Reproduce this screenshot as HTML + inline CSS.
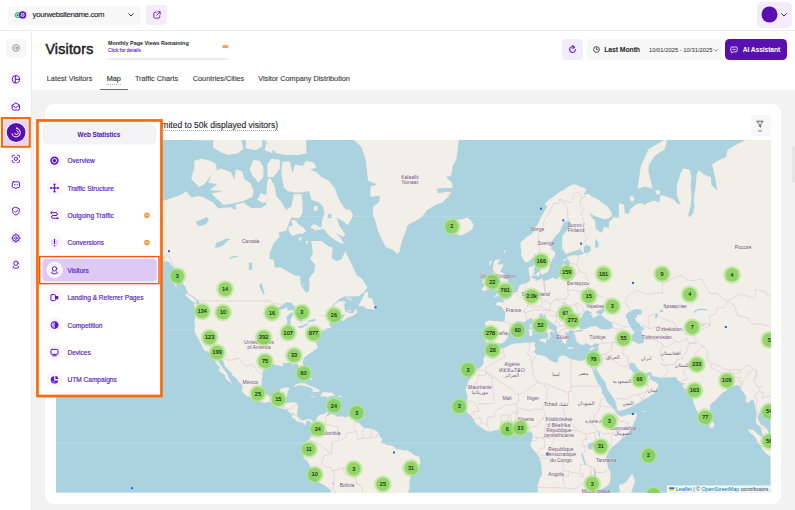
<!DOCTYPE html>
<html lang="en"><head><meta charset="utf-8"><title>Visitors - Map</title>
<style>
*{box-sizing:border-box;margin:0;padding:0}
html,body{width:795px;height:510px;overflow:hidden;background:#fff}
body{position:relative;font-family:"Liberation Sans","DejaVu Sans",sans-serif;color:#1f1f24}
.a{position:absolute}
.t{position:absolute;white-space:nowrap;line-height:1;transform-origin:0 0}
svg{position:absolute;overflow:visible}
svg.map{overflow:hidden}
.lbl text{font-family:"Liberation Sans","DejaVu Sans",sans-serif;font-size:5px;fill:#735883;text-anchor:middle;stroke:#f2efe9;stroke-width:.5px;paint-order:stroke;stroke-opacity:.7}
.ct{font-family:"Liberation Sans",sans-serif;font-size:5.5px;fill:#1a1a1a;text-anchor:middle;stroke:#1a1a1a;stroke-width:.12px}
.at{font-family:"Liberation Sans",sans-serif;font-size:5.35px;fill:#333}
#topbar{left:0;top:0;width:795px;height:30.5px;background:#fff;border-bottom:1px solid #ebebee}
#side{left:0;top:30.5px;width:31.5px;height:480px;background:#fff;border-right:1px solid #ebebee}
#hdr{left:31.5px;top:30.5px;width:764px;height:60px;background:#fff}
#bg{left:31.5px;top:90.3px;width:764px;height:420px;background:#f2f2f3}
#card{left:45.4px;top:103.6px;width:736px;height:400.4px;background:#fff;border-radius:9px}
.mi{position:absolute;left:67.4px;font-size:6.58px;color:#5a1fc4;white-space:nowrap;line-height:1;letter-spacing:0;font-weight:400;-webkit-text-stroke:.18px #5a1fc4}
.tab{position:absolute;top:75.2px;font-size:7.29px;color:#3a3a40;white-space:nowrap;line-height:1;-webkit-text-stroke:.12px #3a3a40}
</style></head><body>
<div class="a" id="topbar"></div>
<div class="a" id="side"></div>
<div class="a" id="hdr"></div>
<div class="a" id="bg"></div>
<div class="a" id="card"></div>

<!-- top bar -->
<div class="a" style="left:8px;top:5.5px;width:133px;height:19.5px;background:#f7f7f8;border-radius:4px"></div>
<svg width="14" height="10" viewBox="0 0 14 10" style="left:14px;top:10.2px"><circle cx="3.7" cy="5.1" r="2.5" fill="#a9ecc4" stroke="#1fbe5f" stroke-width="1"/><circle cx="3.5" cy="5.1" r=".9" fill="#0c8a3d"/><circle cx="8.6" cy="4.9" r="3.7" fill="#5a14c8"/><circle cx="8.6" cy="4.9" r="2.1" fill="#e9defa"/><path d="M6.5 4.9h4.2M8.6 2.8v4.2" fill="none" stroke="#5a14c8" stroke-width=".6"/></svg>
<div class="t" style="left:32.6px;top:11.4px;font-size:7.8px;letter-spacing:-.34px;color:#24242a;-webkit-text-stroke:.12px #24242a">yourwebsitename.com</div>
<svg width="6" height="4" viewBox="0 0 6 4" style="left:128px;top:13.4px"><path d="M.7.7 3 3 5.3.7" fill="none" stroke="#333" stroke-width="1" stroke-linecap="round" stroke-linejoin="round"/></svg>
<div class="a" style="left:146.4px;top:5px;width:20.2px;height:20px;background:#f3ecfd;border-radius:4px"></div>
<svg width="8" height="8" viewBox="0 0 8 8" style="left:152.5px;top:11px"><path d="M3.3 1.2H2.2A1.4 1.4 0 0 0 .8 2.6v3.2a1.4 1.4 0 0 0 1.4 1.4h3.2a1.4 1.4 0 0 0 1.4-1.4V4.7M4.9.8h2.3v2.3M7 1 3.8 4.2" fill="none" stroke="#6a1fd0" stroke-width=".95" stroke-linecap="round" stroke-linejoin="round"/></svg>
<div class="a" style="left:756.7px;top:2.4px;width:35.4px;height:25.4px;background:#f3ecfd;border-radius:5px"></div>
<svg width="17" height="17" viewBox="0 0 17 17" style="left:760.8px;top:6px"><circle cx="8.5" cy="8.5" r="8" fill="#590fb2"/></svg>
<svg width="6" height="4" viewBox="0 0 6 4" style="left:780.8px;top:12.8px"><path d="M.7.7 3 3 5.3.7" fill="none" stroke="#333" stroke-width="1" stroke-linecap="round" stroke-linejoin="round"/></svg>

<!-- header -->
<div class="t" style="left:45.4px;top:42.1px;font-size:14.2px;font-weight:400;-webkit-text-stroke:.5px #1c1c20;color:#1c1c20;letter-spacing:.23px">Visitors</div>
<div class="t" style="left:107.9px;top:40.6px;font-size:5.4px;font-weight:700;color:#26262b">Monthly Page Views Remaining</div>
<div class="t" style="left:107.9px;top:49.3px;font-size:4.89px;color:#5b14dd;-webkit-text-stroke:.1px #5b14dd">Click for details</div>
<div class="a" style="left:107.9px;top:57.7px;width:120.2px;height:2.4px;background:#ececed;border-radius:1.2px"></div>
<div class="t" style="left:222.4px;top:43px;font-size:8px;font-weight:700;color:#f58a2a;-webkit-text-stroke:.35px #f58a2a">∞</div>
<div class="a" style="left:561.6px;top:39.2px;width:21.4px;height:20.6px;background:#f3ecfd;border-radius:4px"></div>
<svg width="9" height="9" viewBox="0 0 9 9" style="left:567.8px;top:45px"><path d="M7.4 4.6a2.9 2.9 0 1 1-1.2-2.4" fill="none" stroke="#6a1fd0" stroke-width="1.15" stroke-linecap="round"/><path d="M4.6.7 6.4 2.1 4.9 3.6" fill="none" stroke="#6a1fd0" stroke-width="1.15" stroke-linecap="round" stroke-linejoin="round"/></svg>
<div class="a" style="left:586.7px;top:39.2px;width:135px;height:20.6px;background:#f7f7f8;border-radius:4px"></div>
<svg width="7" height="7" viewBox="0 0 7 7" style="left:592.9px;top:46.3px"><circle cx="3.5" cy="3.5" r="2.9" fill="none" stroke="#333" stroke-width=".85"/><path d="M3.5 1.9v1.7h1.3" fill="none" stroke="#333" stroke-width=".85" stroke-linecap="round" stroke-linejoin="round"/></svg>
<div class="t" style="left:604.2px;top:47.2px;font-size:6.9px;letter-spacing:-.1px;font-weight:700;color:#1f1f24">Last Month</div>
<div class="t" style="left:649px;top:47.9px;font-size:5.84px;color:#2a2a30">10/01/2025 - 10/31/2025</div>
<svg width="4" height="3" viewBox="0 0 4 3" style="left:713.6px;top:48.6px"><path d="M.5.6 2 2.1 3.5.6" fill="none" stroke="#444" stroke-width=".6" stroke-linecap="round" stroke-linejoin="round"/></svg>
<div class="a" style="left:725px;top:39.2px;width:62.2px;height:20.6px;background:#590fb2;border-radius:4.5px"></div>
<svg width="8" height="8" viewBox="0 0 8 8" style="left:730.2px;top:45.6px"><path d="M1.9 1h4.2A1.1 1.1 0 0 1 7.2 2.1v2.6a1.1 1.1 0 0 1-1.1 1.1H3.4L1.8 7V5.8A1.1 1.1 0 0 1 .8 4.7V2.1A1.1 1.1 0 0 1 1.9 1Z" fill="none" stroke="#fff" stroke-width=".8" stroke-linejoin="round"/><path d="M2.6 3.4h2.8" stroke="#fff" stroke-width=".7" stroke-linecap="round"/></svg>
<div class="t" style="left:742.8px;top:47.2px;font-size:6.7px;letter-spacing:-.09px;font-weight:700;color:#fff">AI Assistant</div>

<!-- tabs -->
<div class="tab" style="left:46.8px">Latest Visitors</div>
<div class="tab" style="left:106.7px;color:#1f1f24">Map</div>
<div class="tab" style="left:134.9px">Traffic Charts</div>
<div class="tab" style="left:192.8px">Countries/Cities</div>
<div class="tab" style="left:258.2px">Visitor Company Distribution</div>
<div class="a" style="left:106.7px;top:84.3px;width:14px;height:0;border-top:.6px dotted #b9b9c0"></div>
<div class="a" style="left:99.6px;top:89.1px;width:28.3px;height:1.1px;background:#6a6a72"></div>

<!-- sidebar -->
<div class="a" style="left:5.6px;top:38.8px;width:21.2px;height:19.6px;background:#f7f7f8;border-radius:4px"></div>
<svg width="8" height="8" viewBox="0 0 8 8" style="left:12px;top:44.4px"><circle cx="4" cy="4" r="3.3" fill="none" stroke="#666" stroke-width=".7"/><path d="M2.3 4h3.2M4.3 2.8 5.5 4 4.3 5.2" fill="none" stroke="#666" stroke-width=".7" stroke-linecap="round" stroke-linejoin="round"/></svg>
<svg width="32" height="300" viewBox="0 0 32 300" style="left:0;top:0">
<circle cx="15.9" cy="79.3" r="9" fill="#fbf9fe"/>
<g transform="translate(15.9 79.3)" fill="none" stroke="#5a14d0" stroke-width=".95" stroke-linecap="round" stroke-linejoin="round"><circle r="3.7" stroke-width="1"/><path d="M-.6 -3.6V3.6M-.6 0H3.6" stroke-width="1"/></g>
<circle cx="15.9" cy="106.4" r="9" fill="#fbf9fe"/>
<g transform="translate(15.9 106.4)" fill="none" stroke="#5a14d0" stroke-width=".95" stroke-linecap="round" stroke-linejoin="round"><path d="M-3.6 -1.2 0 -3.6 3.6 -1.2V2.4A1.2 1.2 0 0 1 2.4 3.6H-2.4A1.2 1.2 0 0 1 -3.6 2.4Z" stroke-width="1"/><path d="M-3.4 -1 0 1.3 3.4 -1" stroke-width=".9"/></g>
<circle cx="15.9" cy="158.8" r="9" fill="#fbf9fe"/>
<g transform="translate(15.9 158.8)" fill="none" stroke="#5a14d0" stroke-width=".95" stroke-linecap="round" stroke-linejoin="round"><path d="M-3.6 -1.6V-2.6A1 1 0 0 1 -2.6 -3.6H-1.6M1.6 -3.6H2.6A1 1 0 0 1 3.6 -2.6V-1.6M3.6 1.6V2.6A1 1 0 0 1 2.6 3.6H1.6M-1.6 3.6H-2.6A1 1 0 0 1 -3.6 2.6V1.6" stroke-width=".95"/><circle r="1.7" stroke-width=".95"/></g>
<circle cx="15.9" cy="185.2" r="9" fill="#fbf9fe"/>
<g transform="translate(15.9 185.2)" fill="none" stroke="#5a14d0" stroke-width=".95" stroke-linecap="round" stroke-linejoin="round"><path d="M-2.4 -3.4H2.4A1.2 1.2 0 0 1 3.6 -2.2V1.2A1.2 1.2 0 0 1 2.4 2.4H1L0 3.7 -1 2.4H-2.4A1.2 1.2 0 0 1 -3.6 1.2V-2.2A1.2 1.2 0 0 1 -2.4 -3.4Z" stroke-width=".95"/><path d="M-1.5 -.5h0M0 -.5h0M1.5 -.5h0" stroke-width="1"/></g>
<circle cx="15.9" cy="211.2" r="9" fill="#fbf9fe"/>
<g transform="translate(15.9 211.2)" fill="none" stroke="#5a14d0" stroke-width=".95" stroke-linecap="round" stroke-linejoin="round"><path d="M0 -3.8 3.3 -2.5V.3C3.3 2 1.8 3.2 0 3.9 -1.8 3.2 -3.3 2 -3.3 .3V-2.5Z" stroke-width=".95"/><path d="M-1.4 0 -.3 1.1 1.6 -.9" stroke-width=".95"/></g>
<circle cx="15.9" cy="238.1" r="9" fill="#fbf9fe"/>
<g transform="translate(15.9 238.1)" fill="none" stroke="#5a14d0" stroke-width=".95" stroke-linecap="round" stroke-linejoin="round"><circle r="3.3" stroke-width="1.1"/><circle r="1.3" stroke-width=".9"/><path d="M0 -4.2v.6M0 3.6v.6M-4.2 0h.6M3.6 0h.6M-3 -3l.4 .4M2.6 2.6l.4 .4M3 -3l-.4 .4M-2.6 2.6l-.4 .4" stroke-width="1"/></g>
<circle cx="15.9" cy="264.6" r="9" fill="#fbf9fe"/>
<g transform="translate(15.9 264.6)" fill="none" stroke="#5a14d0" stroke-width=".95" stroke-linecap="round" stroke-linejoin="round"><circle cy="-1.4" r="2.2" stroke-width="1"/><path d="M-2.1 1.6C-3.6 2 -3.6 3.6 0 3.6S3.6 2 2.1 1.6" stroke-width="1"/></g>
</svg>

<div class="a" style="left:792.4px;top:146px;width:6px;height:37px;background:#e6e6e9;border-radius:2.5px"></div>
<!-- card title + filter -->
<div class="t" style="right:517px;top:121.2px;font-size:8.54px;color:#26262b;-webkit-text-stroke:.12px #26262b">Visitor Map (limited to 50k displayed visitors)</div>
<div class="a" style="left:66px;top:130.3px;width:212px;height:0;border-top:1px dotted #a4a4ac"></div>
<div class="a" style="left:751.4px;top:115.4px;width:19.3px;height:20.2px;background:#f7f7f8;border-radius:3px"></div>
<svg width="8" height="12" viewBox="0 0 8 12" style="left:756px;top:119.6px"><path d="M.8 1.2h6.4L4.7 4.3v2.9L3.3 6.3V4.3Z" fill="none" stroke="#333" stroke-width=".75" stroke-linejoin="round"/><path d="M2.6 10.4 4 11.6 5.4 10.4" fill="none" stroke="#333" stroke-width=".7" stroke-linecap="round" stroke-linejoin="round"/></svg>

<svg class="map" width="714.6" height="352.7" viewBox="0 0 714.6 352.7" style="left:56.0px;top:140.3px">
<rect width="714.6" height="352.7" fill="#aad3df"/>
<g fill="#f2efe9" stroke="#d9d3cf" stroke-width=".25">
<path d="M28.3 81.9L32.4 78.2L38.7 75.7L44.2 78.2L42.5 73.8L37.4 68.6L31.6 64.2L39.9 57.6L46.2 50.3L57.6 42.2L68.9 46.1L79.0 49.5L91.6 51.8L96.6 56.1L106.7 61.1L110.5 59.7L116.8 57.6L121.8 56.1L126.9 54.0L129.9 51.0L135.7 57.6L142.0 56.1L147.0 56.9L157.1 62.5L162.2 68.3L174.8 67.3L179.8 69.9L179.8 64.6L187.4 62.5L194.9 67.9L205.0 67.9L210.1 64.6L210.1 56.1L211.3 41.0L213.8 37.0L218.9 46.5L220.1 56.1L225.2 61.8L230.2 69.9L235.3 66.6L237.8 54.0L245.3 54.0L246.6 63.2L246.6 73.2L242.8 78.2L235.3 77.6L232.7 83.8L230.2 90.8L222.7 92.6L223.4 97.1L217.6 103.6L213.8 112.9L213.6 118.9L217.6 119.4L218.9 127.4L225.2 127.4L230.2 130.6L237.8 135.1L244.1 136.0L244.8 145.0L247.9 150.0L250.4 152.4L252.9 151.2L253.4 145.0L252.9 138.6L257.9 132.0L259.2 125.1L254.2 118.9L256.7 112.9L255.4 100.9L265.5 100.9L273.1 106.8L276.8 107.8L275.6 117.9L280.6 121.3L285.7 118.9L289.2 110.9L294.5 121.8L298.3 129.7L300.8 135.5L305.8 138.6L308.3 142.5L311.4 147.1L308.8 151.2L303.3 156.0L295.7 156.4L288.2 156.4L283.1 159.1L278.1 164.1L273.1 168.9L276.8 166.3L283.1 161.0L289.9 161.4L288.2 164.8L288.7 168.6L289.4 171.5L293.2 173.0L297.0 173.3L300.0 168.6L301.3 172.2L298.3 175.1L292.0 177.6L286.9 181.1L285.2 179.4L289.4 174.8L285.7 175.1L283.1 176.5L279.4 178.3L275.6 180.4L273.8 182.8L273.8 184.6L273.1 185.2L275.6 186.9L275.6 187.6L273.1 187.9L270.5 188.6L266.3 190.0L270.5 190.0L265.7 191.1L265.5 192.9L264.7 194.9L263.0 196.4L261.7 194.6L262.7 197.8L261.0 202.0L259.7 196.8L259.4 202.3L260.5 202.9L261.7 208.1L259.2 209.8L255.9 212.2L252.9 214.0L250.4 216.1L247.9 217.9L246.8 221.7L247.1 224.4L249.1 228.4L250.4 233.0L250.1 235.8L249.1 237.4L247.6 237.6L245.8 234.9L244.8 232.7L243.6 230.1L243.3 226.7L241.3 223.8L239.5 223.8L237.0 224.7L234.0 222.6L230.2 222.9L226.9 222.9L227.2 226.4L223.9 226.1L221.4 225.2L217.6 224.5L213.3 225.5L210.1 227.8L207.0 230.4L206.5 235.2L205.8 240.8L205.5 245.4L206.8 249.5L209.8 253.8L212.6 255.4L214.1 256.6L218.4 255.4L221.4 255.6L223.7 252.2L224.2 248.9L229.0 247.6L232.7 247.5L233.2 248.7L231.5 252.2L231.0 256.2L229.5 257.5L229.7 260.9L227.9 262.5L230.2 262.9L235.3 262.6L240.3 262.6L242.3 264.9L241.6 270.1L241.1 273.9L241.6 276.5L243.8 278.8L246.6 280.6L250.4 279.8L251.6 278.8L254.2 279.3L256.9 281.1L258.4 282.9L260.0 279.8L261.7 276.7L263.5 274.9L265.0 274.4L268.0 274.2L271.3 271.6L272.6 272.6L271.0 274.4L271.5 276.0L273.1 275.2L275.1 273.9L275.6 272.2L276.3 273.9L279.9 275.5L280.6 276.5L285.7 276.2L289.4 277.5L293.2 276.0L295.7 276.0L293.7 276.7L298.3 279.0L298.8 281.6L303.3 282.9L305.8 285.9L308.3 288.0L312.1 288.2L315.9 288.5L319.7 290.5L322.2 292.3L324.0 296.8L326.0 298.8L326.0 301.8L324.7 303.1L328.5 303.4L330.5 304.9L333.5 304.9L338.6 306.9L340.4 309.4L343.6 309.2L347.4 310.4L351.2 310.3L355.0 312.4L358.2 315.2L363.0 316.2L364.3 321.0L364.0 323.6L362.5 327.2L360.0 329.7L358.0 332.3L355.0 336.1L353.7 340.0L353.7 345.3L353.2 349.2L351.9 353.2L351.2 362.7L274.8 362.7L274.8 350.6L272.1 347.9L268.8 345.8L263.0 342.4L260.0 338.7L257.7 333.6L254.9 328.4L252.9 323.8L250.6 320.3L247.9 318.2L247.1 315.0L249.6 311.7L250.6 309.7L248.1 308.9L248.1 305.6L250.1 303.1L250.4 301.1L253.4 299.3L254.2 296.8L256.7 296.5L257.4 293.5L256.7 289.2L256.9 286.2L255.7 284.9L254.9 282.9L254.4 281.9L252.9 280.3L251.6 280.5L250.4 282.1L249.4 284.7L248.1 284.9L247.4 282.9L244.8 282.1L243.1 282.6L241.1 281.6L238.5 278.8L235.8 277.8L236.0 275.2L233.5 272.4L231.2 270.3L231.5 269.3L229.0 269.5L225.2 268.2L221.4 267.5L219.4 265.9L215.6 262.5L212.6 261.7L208.8 263.0L205.0 261.7L200.2 260.0L195.4 257.5L191.1 256.2L187.4 253.0L185.6 250.6L186.6 247.6L185.4 244.3L183.8 243.0L179.8 238.0L176.3 235.2L175.3 232.4L172.2 229.5L169.2 226.7L167.2 220.9L162.7 218.5L162.9 222.3L165.9 226.7L168.0 229.5L171.0 233.8L173.0 238.5L174.0 240.2L176.0 243.0L175.0 243.8L174.0 242.1L169.7 239.1L169.0 235.2L165.9 233.0L163.9 231.8L162.2 230.1L164.2 228.1L160.4 223.8L157.9 219.4L156.6 216.1L153.6 212.2L148.3 210.4L145.0 204.2L143.3 200.4L140.0 194.6L138.5 191.6L139.0 186.3L138.2 182.8L139.5 175.8L139.5 171.1L137.7 163.3L142.0 164.1L143.3 167.5L142.8 161.0L141.5 159.9L138.2 157.2L131.9 153.2L129.4 147.1L125.6 142.1L123.6 138.6L121.8 134.2L119.3 129.7L115.5 125.1L111.8 121.3L108.0 121.8L105.5 118.9L99.7 114.9L94.1 112.9L89.1 112.4L84.0 109.4L79.0 108.8L77.7 112.9L74.0 115.9L69.4 116.9L70.2 110.4L74.0 106.8L70.2 107.8L67.7 112.9L65.1 116.4L63.4 120.3L58.8 125.1L52.5 132.0L46.2 135.5L39.9 137.3L36.7 138.2L42.5 133.3L48.8 129.7L53.8 123.7L55.8 119.4L52.5 118.9L48.8 118.9L43.7 119.8L43.7 112.9L37.4 110.4L34.9 105.2L33.6 102.5L36.7 97.1L42.5 94.3L46.2 93.7L46.2 88.5L41.2 88.5L34.9 88.5Z"/>
<path d="M141.2 163.3L137.0 161.8L133.2 159.1L128.6 154.4L130.7 153.6L136.2 156.8L140.0 160.3Z"/>
<path d="M121.3 149.1L118.8 145.0L116.8 140.8L120.1 140.8L120.1 145.0Z"/>
<path d="M62.6 127.4L67.7 126.0L68.2 121.8L64.4 123.2Z"/>
<path d="M302.5 166.3L307.1 166.3L310.9 168.9L314.6 168.9L317.9 169.9L319.2 166.7L317.2 162.9L316.4 159.1L312.1 157.2L312.1 151.2L308.3 153.2L306.3 159.1L303.3 163.7Z"/>
<path d="M289.4 157.5L295.7 160.7L296.2 159.9L293.2 157.9Z"/>
<path d="M289.9 169.7L295.2 170.4L294.5 171.9L291.2 171.1Z"/>
<path d="M265.5 191.0L270.5 189.3L270.5 190.1L266.0 191.1Z"/>
<path d="M237.8 246.5L240.3 244.1L244.1 243.1L249.1 243.2L252.9 245.2L256.7 246.8L260.5 248.4L265.0 251.1L261.7 251.9L256.2 252.0L257.4 250.0L254.2 247.6L249.1 246.2L245.3 245.2L241.6 245.7L239.0 246.8Z"/>
<path d="M264.2 255.9L266.8 251.9L268.5 251.9L271.3 252.2L275.6 252.4L279.6 255.4L276.8 255.9L273.1 256.4L271.8 257.8L269.3 256.4L264.5 256.2Z"/>
<path d="M254.7 255.9L259.7 256.6L258.2 257.5L254.9 256.7Z"/>
<path d="M282.6 255.8L286.7 256.0L285.7 257.1L282.6 257.0Z"/>
<path d="M296.2 276.0L298.3 275.7L298.3 277.5L296.0 277.5Z"/>
<path d="M254.7 238.3L255.9 237.7L256.2 240.2L254.9 239.9Z"/>
<path d="M288.2 104.1L284.4 97.6L279.4 92.9L286.9 97.1L289.4 94.3L283.1 85.6L280.6 77.6L288.2 81.9L292.0 85.6L297.0 75.7L294.5 69.9L289.4 69.2L283.1 59.7L279.1 48.8L273.1 41.0L265.5 37.0L260.5 32.0L255.4 30.3L249.1 22.5L246.6 26.0L239.0 24.3L236.5 32.9L234.0 21.6L226.4 21.6L225.2 32.9L227.7 47.3L231.5 51.0L237.8 52.5L245.3 52.5L252.9 51.0L255.4 59.7L263.0 62.5L266.8 66.6L268.5 73.2L266.0 80.7L265.5 87.9L257.9 83.8L254.2 87.3L259.2 90.3L268.0 89.1L271.8 94.3L275.8 97.9L283.1 102.5Z"/>
<path d="M157.1 55.4L162.2 60.1L167.2 64.9L177.3 63.5L187.4 61.1L196.2 56.9L197.7 51.0L194.9 43.4L188.6 39.4L186.1 31.2L179.8 29.5L178.5 39.4L174.8 32.0L164.7 28.6L157.1 32.0L152.1 42.6L160.9 44.2L153.8 50.3L167.2 51.0L155.9 53.2Z"/>
<path d="M142.8 47.3L148.3 44.2L154.6 36.2L160.9 29.5L159.6 23.4L154.6 20.7L145.8 18.8L138.2 20.7L138.2 27.8L135.2 38.6L139.5 43.4Z"/>
<path d="M202.5 42.6L207.5 37.0L207.5 26.9L203.8 20.7L197.4 19.8L193.7 28.6L196.2 35.4Z"/>
<path d="M211.3 37.0L217.6 37.0L223.9 28.6L223.9 19.8L215.1 18.8L211.3 24.3Z"/>
<path d="M201.2 59.7L207.5 63.2L211.3 61.1L211.3 55.4L205.0 53.2Z"/>
<path d="M232.7 91.4L236.5 96.0L242.8 93.7L246.6 93.7L250.4 91.4L247.9 87.9L242.8 84.4L239.0 80.1L235.3 80.1L236.5 85.6L232.7 86.8Z"/>
<path d="M242.3 97.6L246.6 97.6L244.1 101.5Z"/>
<path d="M249.6 100.9L252.1 100.9L251.4 105.2Z"/>
<path d="M257.9 71.2L261.7 70.6L261.7 65.9L257.9 65.9Z"/>
<path d="M157.1 7.4L164.7 12.3L172.2 15.1L182.3 13.2L187.4 8.4L184.8 -1.9L174.8 -10.6L157.1 -10.6Z"/>
<path d="M189.9 8.4L200.0 10.3L206.3 6.4L206.3 -10.6L189.9 -10.6Z"/>
<path d="M208.8 10.3L216.4 13.2L217.6 5.4L210.1 3.3Z"/>
<path d="M208.8 0.2L220.1 13.2L230.2 15.1L242.8 15.1L250.4 13.2L250.4 -10.6L208.8 -10.6Z"/>
<path d="M247.9 24.3L254.2 29.5L260.5 27.8L257.9 22.5L250.4 20.7Z"/>
<path d="M245.3 145.0L248.9 145.8L248.4 144.2Z"/>
<path d="M142.0 0.2L154.6 0.2L157.1 -10.6L142.0 -10.6Z"/>
<path d="M341.4 113.9L336.1 109.4L329.8 107.3L326.0 99.8L321.7 90.3L319.7 82.6L316.7 73.8L317.2 66.6L323.5 61.8L323.5 55.4L314.6 56.9L314.1 50.3L314.6 46.5L320.9 44.2L312.1 41.0L310.9 30.3L309.6 19.8L305.8 7.4L298.3 0.2L285.7 -2.9L278.1 -10.6L404.1 -10.6L402.9 0.2L401.6 10.3L400.3 19.8L396.6 26.0L395.3 35.4L390.3 37.0L395.8 42.6L397.1 48.0L388.5 48.0L380.9 48.8L382.2 53.2L389.7 51.8L395.3 52.1L392.8 56.1L386.5 62.5L378.9 65.2L371.4 69.9L366.3 76.4L360.0 80.7L357.2 81.9L351.2 85.6L349.9 91.4L347.4 97.1L344.9 105.2L343.6 111.4Z"/>
<path d="M390.3 83.5L394.8 77.6L397.8 83.5L400.8 79.8L406.6 79.2L411.2 77.3L415.0 80.4L417.7 85.3L415.5 90.0L411.7 92.3L404.9 95.7L400.3 94.0L394.8 93.4L396.6 90.6L391.5 87.1L396.6 86.5L395.3 84.1Z"/>
<path d="M517.0 44.2L521.3 45.0L523.8 46.5L527.1 47.3L530.4 49.5L527.6 54.7L532.6 54.0L536.4 56.9L540.2 58.3L545.3 61.8L551.6 66.6L555.3 71.9L556.1 75.7L552.8 78.2L549.0 79.5L541.5 77.0L536.4 75.1L533.7 72.5L535.2 77.0L539.2 80.7L539.7 88.5L544.0 92.0L546.5 92.0L547.8 86.8L552.8 87.9L552.8 82.6L557.9 77.0L562.9 78.2L562.9 73.2L562.9 63.2L561.1 62.5L567.9 64.6L569.2 73.2L572.5 73.8L574.2 69.2L580.5 63.9L586.8 63.2L588.1 65.2L590.6 63.2L598.2 60.4L603.2 62.5L604.5 54.7L613.3 57.6L618.3 59.7L620.9 63.2L624.6 64.6L620.9 55.4L620.9 45.0L624.6 32.9L627.2 28.6L633.5 29.5L635.5 37.0L634.7 45.0L635.5 56.1L634.7 66.6L632.2 75.1L633.5 77.6L637.2 73.2L638.5 66.6L637.7 59.7L639.8 45.0L640.5 35.4L642.3 30.3L647.3 33.7L649.8 35.4L654.9 37.0L655.4 45.0L661.2 50.3L659.9 41.0L656.1 24.3L663.7 19.8L670.0 17.0L671.3 10.3L678.8 5.4L688.9 0.2L699.0 -2.9L704.0 -10.6L729.2 -10.6L729.2 251.6L724.2 251.6L720.4 259.6L725.5 264.9L727.5 272.6L721.7 276.7L717.1 280.3L716.1 276.7L712.9 276.2L710.3 272.6L706.6 270.8L705.3 268.8L704.0 272.6L702.0 276.5L702.3 279.8L705.3 284.9L707.8 285.9L710.3 288.0L712.6 291.7L712.6 296.8L714.6 299.6L712.6 299.8L707.3 296.0L705.0 289.2L704.3 286.7L699.7 282.9L700.2 277.8L700.8 272.6L699.0 267.5L698.0 260.9L696.0 259.6L692.2 262.8L689.7 262.2L690.2 257.0L687.6 252.2L684.6 248.9L683.4 245.4L680.1 244.9L676.3 246.8L673.8 247.1L671.3 248.1L670.8 250.8L666.2 253.0L662.4 257.0L659.4 260.7L656.1 262.8L654.1 264.9L654.4 269.8L653.1 273.9L653.1 277.0L651.1 279.8L649.1 280.6L647.3 282.6L644.8 279.0L643.0 273.9L640.5 270.1L638.5 264.9L638.0 263.6L635.5 254.3L635.2 248.9L634.7 246.5L633.7 248.4L630.9 249.5L628.4 248.4L625.9 245.4L628.9 243.8L625.1 242.7L622.1 241.0L620.9 238.5L619.6 236.9L614.6 237.2L607.0 237.7L600.7 236.9L596.4 236.3L595.2 232.4L593.9 232.1L589.4 233.5L584.3 231.0L580.5 227.3L578.8 223.8L575.5 222.6L573.0 225.2L574.2 228.4L576.8 231.8L578.5 233.5L578.5 236.6L580.0 238.5L580.5 235.2L582.0 236.3L581.8 239.7L585.6 240.5L589.4 239.7L591.4 237.2L593.9 234.4L594.1 238.0L594.9 239.9L599.7 241.9L602.7 244.9L599.9 250.3L597.7 254.3L595.7 254.8L591.9 257.5L588.1 259.6L583.6 262.2L575.5 266.7L570.5 269.0L565.4 270.6L561.6 270.8L560.4 266.2L559.6 262.2L556.6 257.0L552.8 251.6L550.5 247.6L549.0 242.1L545.8 238.0L542.7 233.0L540.2 229.3L540.2 225.2L538.4 230.1L533.9 223.8L536.4 229.5L537.7 233.8L540.2 239.4L542.0 243.5L545.3 247.6L546.0 251.6L545.8 252.7L549.0 257.0L551.6 263.3L555.3 266.2L559.1 270.1L560.9 273.7L561.6 274.4L565.4 276.7L570.5 274.9L575.5 274.4L581.3 273.1L580.5 276.7L579.3 280.3L576.8 285.4L574.2 290.5L571.7 294.3L566.4 298.1L561.6 303.1L557.9 305.6L555.3 308.1L553.3 310.2L552.1 313.2L550.3 317.0L551.0 320.3L551.6 324.6L552.3 328.4L554.1 330.2L554.6 334.9L554.6 340.0L553.3 344.0L549.0 347.4L545.3 349.0L542.7 351.9L540.0 354.0L540.2 362.7L482.2 362.7L481.7 349.2L481.7 345.3L483.5 338.7L486.0 334.9L485.3 325.4L484.3 320.8L483.0 318.2L481.7 314.7L479.7 312.7L476.2 308.6L474.2 304.9L475.7 302.1L476.2 299.3L476.7 295.5L476.2 293.3L474.4 291.7L472.9 291.7L469.6 292.0L467.1 292.3L464.6 288.5L463.1 287.2L460.6 286.9L455.8 287.4L451.5 289.2L447.0 291.0L443.2 290.2L441.9 289.9L436.9 290.7L433.1 292.0L428.8 290.0L424.8 287.2L420.5 284.4L418.7 281.6L417.5 279.0L414.7 275.7L413.7 274.7L411.7 272.9L409.9 271.6L409.7 269.0L409.2 266.4L407.9 265.5L410.4 262.2L411.7 256.7L410.9 253.8L409.2 249.5L411.2 245.4L412.2 241.3L414.4 238.8L415.7 234.6L418.7 230.4L423.0 228.4L426.3 225.8L427.6 222.6L427.3 219.4L428.6 216.4L432.8 213.1L434.9 211.9L436.4 208.2L437.1 206.4L438.6 206.0L440.7 208.2L444.4 207.9L447.0 208.5L450.5 206.7L454.5 204.5L459.6 203.2L464.6 203.2L469.6 202.6L473.7 202.9L477.0 201.7L478.0 202.9L479.7 202.3L478.7 204.5L478.7 207.0L480.0 208.2L479.2 209.8L477.5 212.2L479.7 213.1L481.0 214.6L485.3 215.2L490.3 216.7L493.8 220.3L497.4 221.7L500.4 222.9L502.4 221.1L502.4 217.6L506.2 215.2L510.0 216.1L512.5 217.9L515.0 219.1L520.0 220.0L525.1 221.1L527.4 220.3L530.1 219.1L533.4 220.0L536.4 220.6L538.4 219.7L539.7 217.6L540.2 215.5L541.5 212.2L542.5 208.8L542.2 207.3L543.2 203.9L541.5 203.9L539.2 203.2L536.4 205.4L534.7 205.7L532.6 204.2L529.4 202.9L528.9 204.8L525.3 204.8L523.1 203.5L521.1 202.6L520.0 200.4L519.5 198.1L519.5 195.2L517.8 194.6L518.0 192.8L521.3 191.6L525.1 191.6L527.4 190.5L525.3 189.3L528.4 189.0L531.1 188.6L535.2 186.3L540.5 186.3L543.7 188.6L547.8 189.6L552.1 189.6L556.8 187.6L556.6 184.6L555.3 182.8L552.1 180.8L549.0 178.3L547.3 176.9L544.7 174.8L546.5 173.3L548.3 171.1L548.5 168.6L551.0 167.8L549.0 168.2L546.5 168.6L544.0 169.7L541.0 171.1L540.2 173.3L544.0 174.4L541.2 175.8L539.0 176.9L536.9 178.0L536.2 177.3L536.7 175.1L533.9 174.4L536.4 172.2L533.9 171.9L532.1 170.4L529.4 170.4L528.1 172.6L526.9 175.1L524.3 178.7L522.3 182.1L521.3 184.6L522.6 186.6L525.1 189.0L524.8 189.6L521.3 190.0L519.3 191.6L518.0 191.9L517.5 191.0L517.3 190.3L513.5 190.0L512.5 191.6L513.2 192.6L510.7 193.1L510.0 191.9L509.7 191.0L509.0 192.9L510.0 195.2L510.5 196.2L509.7 196.8L512.5 198.8L512.5 200.5L511.5 199.7L510.0 199.7L510.5 201.3L510.0 204.2L508.7 204.3L507.7 202.6L506.7 203.2L505.7 200.4L506.7 198.8L505.2 198.5L504.2 196.5L502.9 194.2L500.9 191.9L500.9 188.3L501.1 186.9L498.6 184.9L497.6 184.2L493.3 181.1L490.3 178.7L489.6 175.8L488.3 174.8L487.3 176.5L486.0 174.0L486.5 173.3L483.0 174.4L483.5 176.2L483.8 179.0L486.0 180.8L487.8 184.6L490.3 186.6L492.8 186.6L492.1 187.9L494.6 189.3L497.4 190.8L498.6 192.6L498.2 193.6L497.1 191.9L495.3 191.3L493.8 192.9L493.8 194.2L495.3 196.2L493.6 198.1L492.6 199.6L491.4 199.1L491.8 197.5L492.8 196.2L491.6 192.9L489.8 192.3L489.3 190.8L487.8 190.3L486.3 189.0L483.8 188.1L482.7 186.9L481.5 185.6L480.0 184.9L478.5 183.2L478.0 181.1L476.7 179.0L474.4 178.0L472.7 179.4L470.9 180.1L468.9 182.1L466.9 182.5L465.6 181.8L463.8 181.5L462.1 180.9L460.1 182.1L459.6 184.6L460.3 185.2L457.5 188.3L455.0 189.3L454.0 190.6L451.2 194.6L452.5 197.0L450.7 198.3L449.7 200.7L446.5 203.5L440.9 203.5L438.5 205.3L437.9 205.7L436.1 204.2L434.4 202.0L432.1 202.6L429.3 202.6L429.8 198.1L428.3 197.2L428.6 194.9L429.6 192.3L430.1 189.0L429.6 185.6L428.6 182.8L430.8 181.5L432.6 180.2L437.6 180.9L442.4 181.1L444.4 181.6L447.5 181.5L448.2 181.1L449.0 177.1L449.2 173.9L449.0 171.5L447.0 169.3L446.5 167.5L444.4 166.3L441.2 165.6L440.0 164.7L439.9 163.3L443.2 161.8L447.0 162.4L448.0 162.4L447.2 158.3L448.7 158.3L449.2 159.7L452.3 159.1L454.8 157.5L456.0 154.8L456.8 153.2L459.3 152.2L461.1 151.6L462.1 149.1L463.8 145.2L465.6 144.2L469.4 143.3L472.2 142.1L473.7 141.2L474.4 139.0L473.7 136.9L473.2 134.2L472.4 129.7L472.7 126.9L475.9 126.5L478.7 123.9L478.5 127.4L477.7 129.7L478.0 131.3L479.5 130.2L476.7 134.2L475.9 136.4L475.9 137.3L477.7 139.0L479.7 139.0L479.5 140.8L482.5 140.1L485.8 138.2L487.8 141.2L492.3 139.5L497.4 137.3L499.1 139.0L501.4 138.8L502.4 136.9L504.9 135.1L505.2 133.3L504.9 129.7L505.9 125.1L509.0 123.9L510.5 126.0L512.5 127.4L513.5 123.7L513.7 121.0L511.2 119.8L511.0 116.9L514.3 115.7L517.5 114.9L522.6 115.4L528.1 113.4L524.3 109.4L520.0 110.6L515.0 112.2L510.0 113.9L508.0 110.9L505.7 107.8L506.2 105.2L506.2 96.5L508.7 93.1L513.2 87.3L516.0 85.6L513.7 81.0L512.7 80.7L508.0 82.3L505.7 87.3L503.2 92.6L499.4 96.0L497.4 99.3L495.9 100.4L495.3 104.7L495.3 109.4L498.6 111.4L499.6 113.4L498.4 116.4L496.1 119.4L494.1 123.7L493.3 128.8L492.1 131.5L488.0 134.0L486.8 134.7L484.8 133.8L484.0 131.8L484.3 129.0L482.0 124.1L480.2 120.8L480.0 117.4L479.0 113.4L478.2 116.4L476.4 117.9L472.2 122.0L469.6 122.7L466.4 117.9L465.1 115.4L465.4 110.9L464.6 107.8L464.6 103.1L464.9 101.5L467.6 99.8L471.4 96.5L475.9 93.7L477.2 91.4L479.7 86.8L482.2 83.8L483.8 79.5L488.3 71.2L491.1 66.6L488.5 63.9L492.3 60.4L499.9 54.7L503.7 51.8L507.4 50.3L511.2 47.3Z"/>
<path d="M437.6 157.0L439.4 156.0L440.7 153.2L444.4 152.4L445.2 151.2L443.9 151.4L441.9 150.8L438.6 149.6L441.7 147.1L440.2 145.8L440.4 143.3L443.4 143.5L444.4 143.1L444.4 140.8L442.9 138.6L443.9 136.6L439.7 137.7L439.1 137.1L439.9 133.8L439.7 132.2L437.6 134.9L437.9 131.1L436.4 128.8L437.6 126.0L437.4 123.2L439.4 119.8L444.3 119.6L441.9 123.2L441.7 124.8L447.0 124.1L447.5 125.1L446.7 126.7L445.4 129.7L443.9 131.8L447.0 132.7L448.5 136.4L450.5 138.6L451.7 140.3L452.3 142.5L452.9 144.6L452.5 145.6L453.3 145.2L455.3 145.2L456.4 146.7L456.0 148.7L455.0 150.0L453.8 151.2L455.5 151.8L455.4 152.8L454.4 153.6L452.6 154.2L448.7 154.0L447.0 154.8L445.8 155.0L443.2 155.2L442.9 156.4L441.5 155.8L438.9 157.4Z"/>
<path d="M433.3 134.7L436.4 135.5L437.6 138.2L438.1 139.5L436.4 140.8L436.6 143.5L436.9 145.2L436.0 148.3L433.1 148.7L431.1 150.0L427.3 151.4L426.0 149.6L425.8 148.7L427.6 146.7L427.0 146.9L429.3 144.2L426.3 143.3L426.5 140.8L426.8 139.5L430.3 139.5L429.8 137.7L431.1 135.8Z"/>
<path d="M483.5 199.4L485.8 198.8L491.3 198.5L490.1 201.0L490.1 203.5L487.8 202.4L483.8 200.7Z"/>
<path d="M472.7 189.6L475.2 188.8L476.4 190.3L476.4 193.3L475.9 195.9L474.7 196.0L473.2 196.2L473.2 192.3L472.5 190.6Z"/>
<path d="M475.7 182.8L476.1 185.6L475.2 188.3L473.7 186.6L473.7 184.6L475.4 183.9Z"/>
<path d="M511.2 207.0L513.0 207.0L516.3 207.8L518.3 208.1L518.0 208.8L514.3 209.1L511.2 208.1Z"/>
<path d="M533.4 208.7L535.2 207.8L539.2 206.7L537.7 208.8L536.7 209.3L535.2 210.1L533.7 209.6Z"/>
<path d="M458.0 194.2L460.1 193.1L460.6 194.2L459.6 195.2L458.3 194.7Z"/>
<path d="M480.2 133.3L483.8 131.5L483.8 133.8L482.7 136.4L480.2 135.5Z"/>
<path d="M476.7 134.2L479.2 134.2L479.0 136.0L477.2 136.0Z"/>
<path d="M497.9 127.4L499.9 123.2L499.4 125.6Z"/>
<path d="M507.4 121.8L510.0 119.8L509.5 117.9L507.4 119.8Z"/>
<path d="M581.5 48.8L583.1 37.8L584.8 26.0L592.4 9.3L606.2 1.3L618.3 -6.1L628.4 -10.6L613.3 -10.6L608.8 9.3L598.7 16.0L592.9 25.1L592.4 31.2L596.7 48.8L589.1 46.5Z"/>
<path d="M573.7 57.6L576.3 55.4L578.8 59.0L576.8 61.8L574.5 61.1Z"/>
<path d="M599.4 50.3L604.0 50.3L604.0 54.0L600.7 54.7Z"/>
<path d="M576.3 333.6L577.8 337.4L579.0 342.1L577.3 346.1L576.8 347.9L575.5 351.9L574.2 362.7L562.9 362.7L563.9 353.2L563.4 349.2L562.9 346.6L563.9 344.5L566.7 344.0L568.7 343.2L571.2 340.8L573.0 337.7L575.2 334.9Z"/>
<path d="M653.6 278.3L656.6 281.3L658.4 284.7L657.7 286.9L655.1 288.1L653.6 287.4L653.1 284.1L653.4 280.8Z"/>
<path d="M692.2 289.0L697.7 290.0L700.8 293.5L704.8 296.3L707.8 298.3L711.6 301.1L713.6 303.1L715.4 306.9L719.2 310.7L718.6 317.7L715.4 317.7L709.8 313.2L706.6 309.4L704.8 305.4L701.5 302.3L700.2 298.8L697.0 295.0L693.9 292.5L692.2 290.0Z"/>
<path d="M586.3 271.1L589.4 271.1L588.9 271.9L586.8 271.9Z"/>
<path d="M510.5 196.2L513.0 197.5L514.0 199.4L512.5 198.5L510.7 197.2Z"/>
<path d="M448.2 109.9L449.5 110.4L449.0 113.4L448.0 111.9Z"/>
<path d="M433.9 121.3L436.4 120.8L434.9 123.7L433.3 126.5L433.1 124.6Z"/>
<path d="M409.4 228.5L411.4 228.0L410.7 229.4Z"/>
<path d="M412.2 229.3L413.2 229.1L413.2 230.1L412.2 230.1Z"/>
<path d="M415.5 229.3L417.2 227.5L417.0 229.0Z"/>
</g><g fill="#aad3df">
<path d="M570.5 174.0L573.0 172.2L576.8 170.0L580.5 168.9L585.6 169.7L585.6 174.8L581.3 174.8L580.5 177.6L578.8 178.3L580.5 182.1L584.3 183.9L584.3 186.9L588.1 187.3L588.1 189.6L585.6 191.0L585.6 192.9L586.8 195.2L588.1 199.4L587.8 201.7L586.8 202.9L583.1 203.9L579.3 202.6L576.8 201.0L575.2 198.1L576.3 195.2L578.8 191.6L576.8 191.0L575.5 187.9L573.7 185.2L572.0 182.8L571.5 180.1L570.0 177.6Z"/>
<path d="M219.9 169.7L223.9 170.0L229.0 168.6L230.7 167.1L231.5 170.4L237.8 170.0L239.0 170.4L238.5 166.7L235.3 162.6L230.2 162.2L226.9 164.8L223.9 166.7Z"/>
<path d="M230.7 187.3L232.7 187.4L234.5 184.6L234.5 179.4L236.5 175.8L237.8 173.0L235.3 172.6L231.5 175.8L230.2 177.3L231.5 181.1L230.7 185.2Z"/>
<path d="M238.5 172.6L241.6 171.9L246.6 172.2L250.4 174.8L250.4 177.6L247.1 176.9L246.1 181.8L244.3 182.8L244.1 180.1L241.6 180.4L240.5 180.4L242.1 177.6L241.6 174.8Z"/>
<path d="M241.8 187.3L244.1 188.3L247.9 186.9L252.9 183.9L252.9 183.2L249.1 184.2L245.3 185.9L242.8 185.9Z"/>
<path d="M250.9 181.8L255.4 181.8L259.7 181.1L259.7 178.7L256.7 179.4L252.1 180.4Z"/>
<path d="M141.9 85.7L145.9 85.7L149.9 83.9L153.0 80.5L151.0 76.9L146.9 78.9L142.9 80.5L139.9 81.9Z"/>
<path d="M158.5 107.5L162.8 107.5L167.1 105.3L171.3 101.2L174.6 98.9L170.3 98.4L164.9 101.2L160.6 102.6Z"/>
<path d="M207.3 154.6L208.8 154.0L207.3 149.1L205.6 142.8L203.0 144.9L204.5 149.1Z"/>
<path d="M173.3 118.9L177.3 117.8L183.4 116.6L179.4 115.8L174.3 117.0Z"/>
<path d="M531.9 303.9L534.4 302.6L537.7 302.6L538.4 305.6L536.7 308.9L533.9 309.7L532.1 308.6Z"/>
<path d="M525.6 311.7L526.9 314.5L528.1 319.5L530.1 325.1L528.9 324.9L526.6 319.5L525.6 314.5Z"/>
<path d="M537.7 327.2L539.2 331.0L539.7 334.9L540.5 339.5L539.2 339.3L538.4 334.9L537.9 331.0Z"/>
<path d="M528.1 112.9L531.4 113.2L534.7 110.9L534.7 106.8L530.1 104.7L527.6 107.8Z"/>
<path d="M539.0 107.8L542.7 107.3L542.7 103.6L540.2 98.7L539.0 101.5Z"/>
<path d="M483.5 119.8L486.8 119.8L487.3 116.4L484.8 116.4Z"/>
<path d="M637.2 173.7L641.0 170.8L646.1 169.7L651.1 170.8L650.6 168.9L643.5 168.6L638.5 170.4Z"/>
<path d="M598.9 178.3L601.2 178.3L601.7 173.0L599.7 173.7Z"/>
<path d="M603.7 172.2L607.0 171.9L606.5 169.3L604.0 170.0Z"/>
<path d="M235.3 272.9L237.3 272.9L238.3 274.9L236.3 274.7Z"/>
<path d="M542.2 291.7L543.5 292.3L544.2 296.8L543.0 296.5Z"/>
<path d="M275.6 342.1L277.6 342.9L278.9 345.3L276.6 344.5Z"/>
<path d="M192.9 130.2L196.2 129.3L196.2 122.7L192.9 122.7Z"/>
<path d="M271.8 78.2L275.6 78.2L275.6 73.8L271.8 73.8Z"/>
<path d="M487.5 123.7L489.0 119.8L489.6 120.3L488.3 123.7Z"/>
<path d="M644.0 184.9L649.3 183.9L647.3 185.9Z"/>
<path d="M558.6 198.1L561.9 196.5L561.1 198.5Z"/>
<path d="M565.7 201.7L567.4 198.8L567.7 201.7Z"/>
<path d="M528.6 300.3L531.1 297.3L530.9 298.8L529.6 300.6Z"/>
</g>
<g fill="none" stroke="#cfa9cb" stroke-width=".45" stroke-opacity=".8" stroke-linejoin="round">
<path d="M141.2 161.0L212.2 161.0L213.1 159.9L213.6 162.2L220.1 163.7L226.4 164.8"/>
<path d="M263.7 175.8L271.8 175.8L274.8 172.6L277.6 167.1L281.1 168.2L281.1 173.3L283.1 176.2"/>
<path d="M96.6 56.1L96.6 111.4L101.7 112.9L105.5 118.4L111.8 114.9L115.5 120.8L119.8 129.3L124.4 132.0L123.6 137.3"/>
<path d="M156.9 216.4L162.7 216.4L172.2 220.0L179.3 220.0L179.3 218.5L183.6 218.5L188.6 224.9L192.4 226.7L193.7 224.4L197.4 225.2L201.2 231.0L207.0 235.5"/>
<path d="M219.6 266.2L221.4 262.2L223.9 262.2L222.7 259.1L227.2 257.5L227.2 262.5L229.5 263.0"/>
<path d="M227.2 262.5L226.9 266.4L224.9 268.0"/>
<path d="M226.9 266.4L230.7 269.0"/>
<path d="M231.0 270.1L235.3 268.0L238.3 265.4L242.3 264.9"/>
<path d="M236.0 274.9L240.3 275.7L241.3 275.5"/>
<path d="M243.1 282.6L243.1 279.0"/>
<path d="M272.3 273.1L269.3 277.8L269.8 284.7L275.6 285.4L281.9 287.4L283.1 300.1L275.6 303.1L275.6 313.7L268.0 315.7L265.5 322.1L269.3 327.2L274.3 327.2L276.8 331.0L287.4 327.9L288.2 333.6L299.5 337.4L300.8 344.5L305.1 344.7L306.6 349.8L305.8 354.6"/>
<path d="M252.9 299.6L262.2 303.4L275.6 313.7"/>
<path d="M249.6 311.7L252.9 315.7L254.7 311.7L262.2 303.4"/>
<path d="M300.8 281.6L297.5 288.0L299.0 290.0L300.8 291.7L290.7 293.0L289.4 298.1L284.4 300.6"/>
<path d="M308.3 288.0L305.8 293.0L308.3 298.1L310.9 298.1L314.6 297.3L320.9 297.6L321.7 293.0"/>
<path d="M300.8 291.7L301.5 299.3L308.3 298.1"/>
<path d="M315.9 288.5L314.6 297.3"/>
<path d="M276.8 331.0L278.1 334.9L278.1 342.1L276.8 347.9L274.6 350.0"/>
<path d="M276.8 347.9L279.4 351.9L280.1 357.3"/>
<path d="M256.9 281.1L255.7 284.9"/>
<path d="M418.7 230.4L430.1 230.4L430.1 227.5L444.4 218.8L448.7 217.3L447.0 208.5"/>
<path d="M430.1 231.5L439.9 238.0L444.4 242.1L455.0 248.7L460.3 254.3L462.6 254.0L466.6 253.0L482.2 242.1"/>
<path d="M409.2 248.1L419.2 248.1L419.2 243.5L421.8 242.1L421.8 235.2L430.1 235.2L430.1 231.5"/>
<path d="M430.1 231.5L435.6 238.0L438.1 260.9L438.6 263.6L423.0 263.6L421.3 265.6L415.5 260.7L410.4 262.2"/>
<path d="M439.9 238.0L435.6 238.0"/>
<path d="M473.7 202.9L472.9 210.4L470.9 212.5L474.7 217.9L475.9 223.2L477.2 233.8L475.9 234.4L482.2 242.1L487.8 244.6L489.8 243.5L512.5 253.0L512.5 251.6L515.0 251.6L515.0 219.1"/>
<path d="M481.0 214.6L478.0 218.5L477.2 222.3L475.9 223.2"/>
<path d="M515.0 246.2L545.0 246.2"/>
<path d="M512.5 253.0L512.5 263.0L509.5 263.6L507.4 270.1L508.7 275.2L511.5 280.3L513.7 281.1L521.3 290.5L529.9 294.0L537.7 292.5L542.5 291.5"/>
<path d="M487.8 244.6L491.1 248.9L491.1 259.9L486.3 268.2L488.5 270.6L487.8 271.6L489.8 277.8L487.0 277.8L491.1 284.1L488.8 288.0L488.5 291.5L492.3 297.6"/>
<path d="M462.6 254.0L462.6 260.9L460.8 263.8L454.5 264.9L452.5 264.9L450.2 264.9L447.0 266.9L444.4 268.5L441.2 269.5L438.6 273.1L438.1 276.7"/>
<path d="M460.8 263.8L461.1 273.4L458.8 283.1L458.8 287.2"/>
<path d="M461.1 273.4L463.8 268.2L469.6 270.1L474.7 270.6L479.0 269.0L483.5 269.8L486.3 268.2"/>
<path d="M473.4 291.2L475.4 286.9L480.5 285.9L482.2 283.6L487.0 277.8"/>
<path d="M438.1 276.7L436.4 276.5L431.8 277.3L431.1 283.9L433.1 292.0"/>
<path d="M444.9 290.2L445.2 279.0L444.9 275.2L451.7 274.9L452.5 287.4"/>
<path d="M456.0 287.4L455.5 279.6L454.0 276.7L454.3 275.2L457.8 271.9L461.1 273.4"/>
<path d="M423.0 285.7L426.0 281.6L428.3 284.4L431.1 283.9"/>
<path d="M418.5 280.3L420.7 278.0L424.3 277.8L426.0 281.6"/>
<path d="M414.2 275.5L417.5 273.4L417.5 271.1L423.0 271.6L421.3 265.6"/>
<path d="M476.7 297.3L480.5 297.3L480.5 300.6L476.2 300.6"/>
<path d="M480.5 297.6L485.5 297.6L488.5 299.6L488.5 304.4L488.3 307.9L483.5 309.2L482.2 312.9L480.2 312.9"/>
<path d="M485.5 297.6L492.3 297.6L492.8 298.8L498.9 294.3L498.9 292.3L501.1 290.5L508.5 292.8L513.7 290.2L521.3 290.5"/>
<path d="M498.9 294.3L496.9 303.1L492.8 308.4L492.3 313.2L488.5 315.5L484.8 314.7L482.7 318.0"/>
<path d="M483.0 318.2L493.8 318.0L494.8 321.5L501.1 320.8L502.4 320.8L506.9 321.5L507.2 331.0L512.5 331.0L512.5 336.1L507.4 336.1L507.4 344.5L511.0 348.2"/>
<path d="M481.7 347.4L487.3 347.6L498.6 347.6L511.0 348.2L515.8 348.7"/>
<path d="M512.5 331.0L516.0 332.8L520.6 332.8L525.1 337.2L527.1 337.2L527.1 334.1L523.6 333.3L524.3 327.7L524.8 324.6L529.6 324.1"/>
<path d="M529.6 324.1L534.9 326.9L535.2 335.1L528.1 341.3L528.6 343.2L534.9 345.8L534.9 350.6L535.2 354.0"/>
<path d="M515.8 348.7L520.0 349.0L524.8 343.7L528.6 343.2"/>
<path d="M534.9 326.9L538.4 327.7L539.5 332.3L546.5 332.8L553.8 329.7"/>
<path d="M539.5 332.3L538.7 339.8L542.2 344.0L540.7 346.9L538.4 340.3"/>
<path d="M529.6 324.1L528.6 320.8L526.1 314.2L529.6 311.4L528.9 309.2L528.9 305.9L526.6 306.6L526.6 301.6L530.1 297.3L529.9 294.0"/>
<path d="M528.9 305.9L537.4 305.6L546.8 310.7L550.8 315.0"/>
<path d="M537.4 305.6L537.4 302.6L540.2 298.6L537.7 292.5"/>
<path d="M542.5 291.5L545.0 292.0L548.0 294.0L552.3 293.3L555.3 293.3L557.6 293.0L555.3 296.0L555.3 305.6L556.6 307.4"/>
<path d="M557.6 293.0L560.4 291.2L565.4 290.5L573.0 282.9L570.5 282.9L562.9 280.3L560.4 275.2L559.4 274.9L557.3 274.9L559.9 271.3L560.6 270.8"/>
<path d="M559.9 271.3L554.8 267.2L549.0 266.4L547.5 265.1L544.0 266.7L543.7 264.6L545.3 259.6L549.3 257.0"/>
<path d="M544.0 266.7L543.0 270.8L540.2 273.1L538.4 276.5L537.9 281.3L535.2 282.9L536.9 283.6L540.2 289.5L542.5 291.5"/>
<path d="M540.0 225.2L538.4 220.0"/>
<path d="M540.0 225.2L543.0 226.1L546.5 223.8L545.3 219.4L550.3 217.6L550.8 217.0L549.8 213.7L555.3 210.7L556.1 204.2L558.9 202.3L564.9 202.0L563.6 198.1L564.9 193.9"/>
<path d="M550.3 217.6L553.8 218.2L557.9 220.3L564.7 226.1L569.2 226.4L571.7 223.8L573.0 223.8L574.2 224.1"/>
<path d="M569.2 226.4L572.2 228.1L574.0 228.1"/>
<path d="M573.0 223.8L572.2 220.9L572.5 216.7L567.9 214.9L566.4 211.9L568.4 208.5L566.4 205.7L564.9 202.0"/>
<path d="M543.2 203.9L544.5 203.2L548.3 202.9L552.8 203.2L558.9 202.3"/>
<path d="M542.5 209.9L544.2 211.3L542.2 214.0L541.7 215.8L549.8 213.7"/>
<path d="M559.9 261.2L560.9 258.6L563.4 258.6L568.9 259.1L571.7 259.3L575.5 255.4L583.1 254.3L585.8 260.7"/>
<path d="M583.1 254.3L590.6 251.6L592.4 246.2L591.1 244.3L584.6 243.8L582.0 240.5L581.0 239.1"/>
<path d="M592.4 246.2L591.1 244.3L593.1 240.5L594.1 238.3"/>
<path d="M590.6 251.6L585.8 260.7"/>
<path d="M564.9 193.9L568.4 196.5L573.0 193.9L575.2 198.1"/>
<path d="M587.8 201.7L593.1 199.1L596.2 198.8L601.5 201.0L606.2 203.9L606.0 207.9L604.7 211.0L605.5 219.4L607.8 219.7L605.2 224.1L609.5 225.5L612.0 231.8L610.3 233.5L607.3 237.4"/>
<path d="M605.2 224.1L609.5 225.5L619.1 224.1L620.1 220.3L626.7 218.2L627.2 214.6L630.9 211.9L632.7 204.2L640.0 202.6"/>
<path d="M606.2 203.9L609.5 207.9L614.6 204.8L619.6 201.3L623.4 202.6L627.2 200.7L630.9 198.1L632.7 203.5L640.0 202.6L640.8 202.0"/>
<path d="M623.9 241.6L629.2 239.9L631.2 238.8L627.2 232.4L629.4 229.5L635.7 224.1L640.3 220.6L639.8 215.5L638.5 214.3L645.6 206.7L648.6 207.3L651.1 211.0L650.6 214.3L652.4 216.4L650.3 219.4L656.1 223.2L653.9 227.3"/>
<path d="M653.9 227.3L661.9 231.5L668.2 233.5L674.0 234.1L674.3 229.8L668.7 229.5L661.2 225.2L656.1 223.2"/>
<path d="M674.0 234.1L678.3 233.2L683.9 233.0L684.1 230.1L689.4 226.4L693.9 225.5L697.2 229.0L697.2 229.8"/>
<path d="M674.3 229.8L676.1 231.5L678.3 229.0L683.1 230.1L684.1 230.1"/>
<path d="M676.6 246.2L675.8 239.9L674.0 238.3L674.8 234.1L678.3 235.2L678.3 237.4L684.9 238.0L681.9 241.6L684.6 241.6L685.4 246.5L684.6 248.9"/>
<path d="M685.4 246.5L687.1 240.8L690.7 236.9L691.9 233.5L697.2 229.8L700.8 230.7L697.7 240.8L701.5 246.2L707.1 247.3"/>
<path d="M700.8 230.7L700.5 238.5L697.7 240.8"/>
<path d="M701.5 246.2L704.3 250.8L698.5 255.4L701.3 261.7L699.5 264.9L702.0 271.1L703.0 273.1L700.8 277.0"/>
<path d="M704.3 250.8L705.5 253.0L707.3 252.7L706.6 258.3L709.3 256.4L714.1 256.2L716.1 260.9L718.1 266.4L711.6 266.9L710.1 268.5L711.3 273.4"/>
<path d="M704.3 286.9L706.8 288.7L709.3 287.4"/>
<path d="M569.7 177.6L574.2 170.0L570.5 164.8L569.2 162.9L571.7 155.6L580.5 150.4L590.6 154.4L598.2 153.2L607.0 153.2L605.7 145.0L615.8 139.0L625.9 135.1L630.9 139.9L637.2 140.8L645.6 139.0L648.3 143.7L653.6 153.6L661.2 153.2L666.7 158.7L672.0 160.7"/>
<path d="M672.0 160.7L668.0 167.8L661.2 167.8L659.4 174.0L653.4 176.2L654.1 185.6L649.8 183.2L643.0 183.2L638.5 182.1L630.9 185.2L628.9 189.6L623.4 189.6L619.6 186.3L618.3 182.8L605.7 178.3L599.4 174.0L593.1 175.8L593.1 188.6L588.1 185.2L584.1 186.9"/>
<path d="M593.1 188.6L595.7 188.6L603.2 185.6L608.3 192.9L613.3 196.5L619.6 201.3"/>
<path d="M654.1 185.6L646.1 189.6L637.5 194.9L638.0 197.8L640.8 202.0L648.1 207.3L648.6 207.3"/>
<path d="M628.9 189.6L636.0 190.3L637.5 194.9L629.7 194.2L626.7 190.6"/>
<path d="M672.0 160.7L673.8 162.6L678.8 165.6L681.3 175.1L692.4 178.3L695.0 183.9L706.6 184.2L716.6 187.6"/>
<path d="M672.0 160.7L678.1 157.5L684.9 154.0L696.5 157.9L699.7 155.2L699.0 149.1L709.6 152.0L711.6 156.0L716.6 155.6"/>
<path d="M529.9 56.1L524.8 59.0L523.8 65.2L527.6 68.6L525.3 73.8L527.9 81.3L526.6 86.2L529.1 90.8L527.6 93.1L531.6 97.6L522.1 110.4"/>
<path d="M524.8 59.0L525.8 57.6L522.6 51.8L517.5 54.7L516.8 59.0L514.8 62.5L510.0 61.8L504.9 59.0L503.7 59.0L502.4 63.9L497.6 63.2L492.6 73.2L490.8 76.4L488.5 78.9L486.5 87.9L487.5 90.3L482.5 93.7L482.7 104.1L483.8 107.3L483.0 112.9L481.7 116.9L480.2 117.4"/>
<path d="M503.7 59.0L511.5 67.3L512.0 78.2L512.7 80.7"/>
<path d="M522.8 115.9L521.1 124.6L522.3 127.9L523.1 131.5L528.1 132.9L529.9 133.8L530.1 137.7L534.4 143.3L530.9 144.6L532.1 148.7L538.7 150.0L541.7 155.6L547.8 157.5L552.8 158.7L552.1 165.2L548.3 168.2"/>
<path d="M532.1 148.7L528.9 152.0L522.6 151.2L516.3 149.6L511.5 150.8L512.2 146.3L511.2 141.2L516.3 139.5L519.5 135.1L523.1 131.5"/>
<path d="M511.2 141.2L509.5 139.0L501.9 139.0"/>
<path d="M509.5 139.0L509.2 136.9L505.7 135.5"/>
<path d="M505.2 131.5L515.0 131.1L519.5 133.3L519.5 135.1"/>
<path d="M513.2 123.2L517.5 123.7L521.1 124.6"/>
<path d="M511.5 150.8L512.5 155.2L509.0 159.1L508.0 163.3L514.8 166.0L519.0 163.7L523.1 174.0L526.9 175.1"/>
<path d="M519.0 163.7L522.6 163.7L525.6 165.2L527.9 170.8L523.1 174.0"/>
<path d="M509.0 159.1L499.4 159.1L494.8 164.5L489.8 161.0L482.5 156.0L489.3 153.6L487.8 141.2"/>
<path d="M499.4 159.1L508.0 163.3L503.2 171.5L499.4 172.6L493.6 170.4L494.8 164.5"/>
<path d="M508.0 163.3L509.7 165.2L505.4 171.1L503.2 171.5"/>
<path d="M509.2 177.6L505.9 176.5L503.2 171.5"/>
<path d="M509.2 177.6L509.7 180.1L520.0 179.0L524.1 180.4"/>
<path d="M509.2 178.7L508.5 185.2L509.7 188.6L518.5 187.3L522.6 186.3"/>
<path d="M518.5 187.3L518.3 190.0L517.7 190.6"/>
<path d="M509.7 188.6L504.9 190.0L502.4 193.9"/>
<path d="M487.8 141.2L489.0 148.7L489.3 153.6"/>
<path d="M482.5 156.0L486.8 162.2L484.8 166.7L493.6 170.4"/>
<path d="M484.8 166.7L476.2 166.7L473.7 166.0L471.2 166.3L467.4 171.5L469.6 172.6L478.2 170.0L483.3 169.7L486.5 170.4L493.6 170.4"/>
<path d="M471.2 166.3L472.7 161.0L468.1 159.1L467.4 156.8L467.1 154.0L469.6 148.3L470.1 143.7"/>
<path d="M468.1 159.1L464.1 157.2L458.3 152.8"/>
<path d="M467.1 154.0L462.6 151.6L460.6 151.6"/>
<path d="M470.9 180.1L469.6 172.6L467.4 171.5"/>
<path d="M447.5 181.5L453.8 183.9L460.1 184.9"/>
<path d="M429.6 186.6L436.4 187.6L434.4 192.9L433.1 199.4L433.3 202.0"/>
<path d="M473.7 136.9L477.0 137.3"/>
<path d="M431.3 138.6L433.6 140.3L436.1 140.3"/>
<path d="M486.3 174.0L490.6 174.0L493.6 170.4"/>
<path d="M491.8 175.1L499.9 176.2L500.9 176.2L500.1 181.1L498.6 184.6"/>
<path d="M500.9 176.2L499.9 174.0L499.4 172.6"/>
<path d="M500.1 181.1L503.4 183.5L503.9 186.3L500.9 186.6"/>
<path d="M503.9 186.3L508.5 185.2"/>
<path d="M556.6 187.9L561.6 189.3L565.4 188.6L569.4 186.9L574.5 186.9"/>
<path d="M552.8 181.5L562.4 184.2L569.4 186.9"/>
<path d="M561.6 189.3L562.1 192.6L564.9 193.9"/>
<path d="M565.4 188.6L569.2 194.6L568.4 196.5"/>
</g>
<g stroke="#ffffff" stroke-opacity=".35" stroke-width=".5">
<line x1="0" x2="714.6" y1="303.1" y2="303.1"/>
<line x1="0" x2="714.6" y1="189.7" y2="189.7"/>
<line x1="0" x2="714.6" y1="76.3" y2="76.3"/>
</g>
<g class="lbl">
<text x="194.5" y="102.8">Canada</text>
<text x="354.0" y="38.6">Kalaallit</text>
<text x="354.0" y="44.0">Nunaat</text>
<text x="203.0" y="203.6">United States</text>
<text x="203.0" y="209.0">of America</text>
<text x="194.5" y="244.3">México</text>
<text x="274.0" y="294.8">Colombia</text>
<text x="291.0" y="347.3">Bolivia</text>
<text x="481.5" y="91.3">Norge</text>
<text x="490.0" y="105.3">Sverige</text>
<text x="520.0" y="86.6">Suomi /</text>
<text x="520.0" y="92.0">Finland</text>
<text x="442.0" y="137.8">United Kingdom</text>
<text x="457.5" y="171.8">France</text>
<text x="522.0" y="144.8">Беларусь</text>
<text x="539.0" y="167.8">Україна</text>
<text x="687.0" y="108.8">Россия</text>
<text x="619.0" y="168.3">Қазақстан</text>
<text x="541.5" y="198.8">Türkiye</text>
<text x="613.0" y="191.3">Oʻzbekiston</text>
<text x="600.5" y="198.8">Türkmenistan</text>
<text x="507.0" y="199.3">Ελλάς</text>
<text x="443.0" y="194.8">España</text>
<text x="456.0" y="226.4">Algérie</text>
<text x="456.0" y="231.8">ⵍⵣⵣⴰⵢⴻⵔ</text>
<text x="456.0" y="237.2">الجزائر</text>
<text x="500.0" y="236.3">ليبيا</text>
<text x="527.5" y="234.8">مصر</text>
<text x="424.0" y="248.6">Mauritanie</text>
<text x="424.0" y="254.0">موريتانيا</text>
<text x="451.0" y="260.3">Mali</text>
<text x="477.0" y="260.3">Niger</text>
<text x="500.0" y="266.3">Tchad تشاد</text>
<text x="530.0" y="265.3">السودان</text>
<text x="566.0" y="243.3">السعودية</text>
<text x="572.0" y="265.3">اليمن</text>
<text x="597.0" y="252.3">عمان</text>
<text x="557.0" y="218.8">العراق</text>
<text x="590.0" y="220.3">ایران</text>
<text x="614.5" y="215.3">افغانستان</text>
<text x="627.0" y="227.3">پاکستان</text>
<text x="503.0" y="281.2">Ködörösêse</text>
<text x="503.0" y="286.6">tî Bêafrîka</text>
<text x="503.0" y="292.0">République</text>
<text x="503.0" y="297.4">centrafricaine</text>
<text x="505.0" y="310.9">République</text>
<text x="505.0" y="316.3">démocratique</text>
<text x="505.0" y="321.7">du Congo</text>
<text x="500.0" y="336.3">Angola</text>
<text x="550.0" y="321.8">Tanzania</text>
<text x="540.0" y="352.8">Moçambique</text>
<text x="567.0" y="290.1">Soomaaliya</text>
<text x="567.0" y="295.5">الصومال</text>
<text x="470.0" y="281.3">Nigeria</text>
<text x="538.0" y="283.3">ኢትዮጵያ</text>
<text x="480.0" y="156.3">Deutschland</text>
</g>
<rect x="484.0" y="67.7" width="2" height="2" fill="#1b62ff"/>
<rect x="506.3" y="79.4" width="2" height="2" fill="#1b62ff"/>
<rect x="524.0" y="102.6" width="2" height="2" fill="#1b62ff"/>
<rect x="576.0" y="141.9" width="2" height="2" fill="#1b62ff"/>
<rect x="668.8" y="186.0" width="2" height="2" fill="#1b62ff"/>
<rect x="576.0" y="273.0" width="2" height="2" fill="#1b62ff"/>
<rect x="490.2" y="312.7" width="2" height="2" fill="#1b62ff"/>
<rect x="337.0" y="311.5" width="2" height="2" fill="#1b62ff"/>
<rect x="112.0" y="110.2" width="2" height="2" fill="#1b62ff"/>
<rect x="318.5" y="166.2" width="2" height="2" fill="#1b62ff"/>
<rect x="75.0" y="347.2" width="2" height="2" fill="#1b62ff"/>
<circle cx="395.9" cy="86.6" r="8.9" fill="#b5e28c" fill-opacity=".62"/><circle cx="395.9" cy="86.6" r="6.8" fill="#6ecc39" fill-opacity=".62"/>
<text class="ct" x="395.9" y="88.5">2</text>
<circle cx="121.4" cy="136.1" r="8.9" fill="#b5e28c" fill-opacity=".62"/><circle cx="121.4" cy="136.1" r="6.8" fill="#6ecc39" fill-opacity=".62"/>
<text class="ct" x="121.4" y="138.0">3</text>
<circle cx="169.1" cy="149.1" r="8.9" fill="#b5e28c" fill-opacity=".62"/><circle cx="169.1" cy="149.1" r="6.8" fill="#6ecc39" fill-opacity=".62"/>
<text class="ct" x="169.1" y="151.0">14</text>
<circle cx="146.3" cy="171.4" r="8.9" fill="#b5e28c" fill-opacity=".62"/><circle cx="146.3" cy="171.4" r="6.8" fill="#6ecc39" fill-opacity=".62"/>
<text class="ct" x="146.3" y="173.3">134</text>
<circle cx="167.0" cy="172.4" r="8.9" fill="#b5e28c" fill-opacity=".62"/><circle cx="167.0" cy="172.4" r="6.8" fill="#6ecc39" fill-opacity=".62"/>
<text class="ct" x="167.0" y="174.3">10</text>
<circle cx="216.0" cy="172.8" r="8.9" fill="#b5e28c" fill-opacity=".62"/><circle cx="216.0" cy="172.8" r="6.8" fill="#6ecc39" fill-opacity=".62"/>
<text class="ct" x="216.0" y="174.7">16</text>
<circle cx="245.9" cy="172.4" r="8.9" fill="#b5e28c" fill-opacity=".62"/><circle cx="245.9" cy="172.4" r="6.8" fill="#6ecc39" fill-opacity=".62"/>
<text class="ct" x="245.9" y="174.3">3</text>
<circle cx="277.9" cy="175.2" r="8.9" fill="#b5e28c" fill-opacity=".62"/><circle cx="277.9" cy="175.2" r="6.8" fill="#6ecc39" fill-opacity=".62"/>
<text class="ct" x="277.9" y="177.1">26</text>
<circle cx="153.6" cy="197.6" r="8.9" fill="#b5e28c" fill-opacity=".62"/><circle cx="153.6" cy="197.6" r="6.8" fill="#6ecc39" fill-opacity=".62"/>
<text class="ct" x="153.6" y="199.5">123</text>
<circle cx="207.7" cy="197.6" r="8.9" fill="#b5e28c" fill-opacity=".62"/><circle cx="207.7" cy="197.6" r="6.8" fill="#6ecc39" fill-opacity=".62"/>
<text class="ct" x="207.7" y="199.5">392</text>
<circle cx="232.2" cy="192.7" r="8.9" fill="#b5e28c" fill-opacity=".62"/><circle cx="232.2" cy="192.7" r="6.8" fill="#6ecc39" fill-opacity=".62"/>
<text class="ct" x="232.2" y="194.6">107</text>
<circle cx="257.6" cy="193.6" r="8.9" fill="#b5e28c" fill-opacity=".62"/><circle cx="257.6" cy="193.6" r="6.8" fill="#6ecc39" fill-opacity=".62"/>
<text class="ct" x="257.6" y="195.5">877</text>
<circle cx="161.2" cy="212.6" r="8.9" fill="#b5e28c" fill-opacity=".62"/><circle cx="161.2" cy="212.6" r="6.8" fill="#6ecc39" fill-opacity=".62"/>
<text class="ct" x="161.2" y="214.5">199</text>
<circle cx="209.0" cy="221.3" r="8.9" fill="#b5e28c" fill-opacity=".62"/><circle cx="209.0" cy="221.3" r="6.8" fill="#6ecc39" fill-opacity=".62"/>
<text class="ct" x="209.0" y="223.2">75</text>
<circle cx="238.0" cy="215.5" r="8.9" fill="#b5e28c" fill-opacity=".62"/><circle cx="238.0" cy="215.5" r="6.8" fill="#6ecc39" fill-opacity=".62"/>
<text class="ct" x="238.0" y="217.4">33</text>
<circle cx="247.6" cy="233.3" r="8.9" fill="#b5e28c" fill-opacity=".62"/><circle cx="247.6" cy="233.3" r="6.8" fill="#6ecc39" fill-opacity=".62"/>
<text class="ct" x="247.6" y="235.2">60</text>
<circle cx="201.9" cy="253.7" r="8.9" fill="#b5e28c" fill-opacity=".62"/><circle cx="201.9" cy="253.7" r="6.8" fill="#6ecc39" fill-opacity=".62"/>
<text class="ct" x="201.9" y="255.6">25</text>
<circle cx="222.3" cy="259.1" r="8.9" fill="#b5e28c" fill-opacity=".62"/><circle cx="222.3" cy="259.1" r="6.8" fill="#6ecc39" fill-opacity=".62"/>
<text class="ct" x="222.3" y="261.0">15</text>
<circle cx="277.9" cy="265.7" r="8.9" fill="#b5e28c" fill-opacity=".62"/><circle cx="277.9" cy="265.7" r="6.8" fill="#6ecc39" fill-opacity=".62"/>
<text class="ct" x="277.9" y="267.6">24</text>
<circle cx="300.7" cy="272.8" r="8.9" fill="#b5e28c" fill-opacity=".62"/><circle cx="300.7" cy="272.8" r="6.8" fill="#6ecc39" fill-opacity=".62"/>
<text class="ct" x="300.7" y="274.7">3</text>
<circle cx="261.7" cy="288.9" r="8.9" fill="#b5e28c" fill-opacity=".62"/><circle cx="261.7" cy="288.9" r="6.8" fill="#6ecc39" fill-opacity=".62"/>
<text class="ct" x="261.7" y="290.8">24</text>
<circle cx="253.0" cy="309.3" r="8.9" fill="#b5e28c" fill-opacity=".62"/><circle cx="253.0" cy="309.3" r="6.8" fill="#6ecc39" fill-opacity=".62"/>
<text class="ct" x="253.0" y="311.2">11</text>
<circle cx="258.8" cy="334.6" r="8.9" fill="#b5e28c" fill-opacity=".62"/><circle cx="258.8" cy="334.6" r="6.8" fill="#6ecc39" fill-opacity=".62"/>
<text class="ct" x="258.8" y="336.5">10</text>
<circle cx="297.8" cy="328.8" r="8.9" fill="#b5e28c" fill-opacity=".62"/><circle cx="297.8" cy="328.8" r="6.8" fill="#6ecc39" fill-opacity=".62"/>
<text class="ct" x="297.8" y="330.7">3</text>
<circle cx="326.9" cy="344.2" r="8.9" fill="#b5e28c" fill-opacity=".62"/><circle cx="326.9" cy="344.2" r="6.8" fill="#6ecc39" fill-opacity=".62"/>
<text class="ct" x="326.9" y="346.1">25</text>
<circle cx="355.1" cy="328.0" r="8.9" fill="#b5e28c" fill-opacity=".62"/><circle cx="355.1" cy="328.0" r="6.8" fill="#6ecc39" fill-opacity=".62"/>
<text class="ct" x="355.1" y="329.9">31</text>
<circle cx="412.0" cy="229.7" r="8.9" fill="#b5e28c" fill-opacity=".62"/><circle cx="412.0" cy="229.7" r="6.8" fill="#6ecc39" fill-opacity=".62"/>
<text class="ct" x="412.0" y="231.6">3</text>
<circle cx="403.3" cy="266.5" r="8.9" fill="#b5e28c" fill-opacity=".62"/><circle cx="403.3" cy="266.5" r="6.8" fill="#6ecc39" fill-opacity=".62"/>
<text class="ct" x="403.3" y="268.4">3</text>
<circle cx="485.4" cy="121.0" r="8.9" fill="#b5e28c" fill-opacity=".62"/><circle cx="485.4" cy="121.0" r="6.8" fill="#6ecc39" fill-opacity=".62"/>
<text class="ct" x="485.4" y="122.9">166</text>
<circle cx="510.8" cy="132.6" r="8.9" fill="#b5e28c" fill-opacity=".62"/><circle cx="510.8" cy="132.6" r="6.8" fill="#6ecc39" fill-opacity=".62"/>
<text class="ct" x="510.8" y="134.5">159</text>
<circle cx="547.5" cy="134.0" r="8.9" fill="#b5e28c" fill-opacity=".62"/><circle cx="547.5" cy="134.0" r="6.8" fill="#6ecc39" fill-opacity=".62"/>
<text class="ct" x="547.5" y="135.9">181</text>
<circle cx="606.0" cy="134.0" r="8.9" fill="#b5e28c" fill-opacity=".62"/><circle cx="606.0" cy="134.0" r="6.8" fill="#6ecc39" fill-opacity=".62"/>
<text class="ct" x="606.0" y="135.9">9</text>
<circle cx="676.1" cy="134.9" r="8.9" fill="#b5e28c" fill-opacity=".62"/><circle cx="676.1" cy="134.9" r="6.8" fill="#6ecc39" fill-opacity=".62"/>
<text class="ct" x="676.1" y="136.8">4</text>
<circle cx="436.3" cy="142.0" r="8.9" fill="#b5e28c" fill-opacity=".62"/><circle cx="436.3" cy="142.0" r="6.8" fill="#6ecc39" fill-opacity=".62"/>
<text class="ct" x="436.3" y="143.9">22</text>
<circle cx="449.2" cy="150.5" r="8.9" fill="#b5e28c" fill-opacity=".62"/><circle cx="449.2" cy="150.5" r="6.8" fill="#6ecc39" fill-opacity=".62"/>
<text class="ct" x="449.2" y="152.4">781</text>
<circle cx="475.6" cy="156.3" r="8.9" fill="#b5e28c" fill-opacity=".62"/><circle cx="475.6" cy="156.3" r="6.8" fill="#6ecc39" fill-opacity=".62"/>
<text class="ct" x="475.6" y="158.2">2.0k</text>
<circle cx="532.7" cy="156.3" r="8.9" fill="#b5e28c" fill-opacity=".62"/><circle cx="532.7" cy="156.3" r="6.8" fill="#6ecc39" fill-opacity=".62"/>
<text class="ct" x="532.7" y="158.2">15</text>
<circle cx="633.7" cy="154.5" r="8.9" fill="#b5e28c" fill-opacity=".62"/><circle cx="633.7" cy="154.5" r="6.8" fill="#6ecc39" fill-opacity=".62"/>
<text class="ct" x="633.7" y="156.4">4</text>
<circle cx="556.4" cy="166.2" r="8.9" fill="#b5e28c" fill-opacity=".62"/><circle cx="556.4" cy="166.2" r="6.8" fill="#6ecc39" fill-opacity=".62"/>
<text class="ct" x="556.4" y="168.1">3</text>
<circle cx="509.5" cy="173.4" r="8.9" fill="#b5e28c" fill-opacity=".62"/><circle cx="509.5" cy="173.4" r="6.8" fill="#6ecc39" fill-opacity=".62"/>
<text class="ct" x="509.5" y="175.3">61</text>
<circle cx="516.4" cy="180.6" r="8.9" fill="#b5e28c" fill-opacity=".62"/><circle cx="516.4" cy="180.6" r="6.8" fill="#6ecc39" fill-opacity=".62"/>
<text class="ct" x="516.4" y="182.5">272</text>
<circle cx="484.5" cy="185.4" r="8.9" fill="#b5e28c" fill-opacity=".62"/><circle cx="484.5" cy="185.4" r="6.8" fill="#6ecc39" fill-opacity=".62"/>
<text class="ct" x="484.5" y="187.3">52</text>
<circle cx="461.7" cy="190.3" r="8.9" fill="#b5e28c" fill-opacity=".62"/><circle cx="461.7" cy="190.3" r="6.8" fill="#6ecc39" fill-opacity=".62"/>
<text class="ct" x="461.7" y="192.2">60</text>
<circle cx="434.5" cy="193.3" r="8.9" fill="#b5e28c" fill-opacity=".62"/><circle cx="434.5" cy="193.3" r="6.8" fill="#6ecc39" fill-opacity=".62"/>
<text class="ct" x="434.5" y="195.2">278</text>
<circle cx="636.3" cy="187.2" r="8.9" fill="#b5e28c" fill-opacity=".62"/><circle cx="636.3" cy="187.2" r="6.8" fill="#6ecc39" fill-opacity=".62"/>
<text class="ct" x="636.3" y="189.1">7</text>
<circle cx="567.6" cy="198.6" r="8.9" fill="#b5e28c" fill-opacity=".62"/><circle cx="567.6" cy="198.6" r="6.8" fill="#6ecc39" fill-opacity=".62"/>
<text class="ct" x="567.6" y="200.5">55</text>
<circle cx="436.7" cy="210.2" r="8.9" fill="#b5e28c" fill-opacity=".62"/><circle cx="436.7" cy="210.2" r="6.8" fill="#6ecc39" fill-opacity=".62"/>
<text class="ct" x="436.7" y="212.1">28</text>
<circle cx="537.6" cy="219.1" r="8.9" fill="#b5e28c" fill-opacity=".62"/><circle cx="537.6" cy="219.1" r="6.8" fill="#6ecc39" fill-opacity=".62"/>
<text class="ct" x="537.6" y="221.0">78</text>
<circle cx="640.8" cy="224.5" r="8.9" fill="#b5e28c" fill-opacity=".62"/><circle cx="640.8" cy="224.5" r="6.8" fill="#6ecc39" fill-opacity=".62"/>
<text class="ct" x="640.8" y="226.4">233</text>
<circle cx="583.6" cy="239.6" r="8.9" fill="#b5e28c" fill-opacity=".62"/><circle cx="583.6" cy="239.6" r="6.8" fill="#6ecc39" fill-opacity=".62"/>
<text class="ct" x="583.6" y="241.5">66</text>
<circle cx="670.7" cy="240.6" r="8.9" fill="#b5e28c" fill-opacity=".62"/><circle cx="670.7" cy="240.6" r="6.8" fill="#6ecc39" fill-opacity=".62"/>
<text class="ct" x="670.7" y="242.5">109</text>
<circle cx="638.6" cy="250.4" r="8.9" fill="#b5e28c" fill-opacity=".62"/><circle cx="638.6" cy="250.4" r="6.8" fill="#6ecc39" fill-opacity=".62"/>
<text class="ct" x="638.6" y="252.3">163</text>
<circle cx="649.3" cy="277.2" r="8.9" fill="#b5e28c" fill-opacity=".62"/><circle cx="649.3" cy="277.2" r="6.8" fill="#6ecc39" fill-opacity=".62"/>
<text class="ct" x="649.3" y="279.1">77</text>
<circle cx="553.3" cy="281.2" r="8.9" fill="#b5e28c" fill-opacity=".62"/><circle cx="553.3" cy="281.2" r="6.8" fill="#6ecc39" fill-opacity=".62"/>
<text class="ct" x="553.3" y="283.1">3</text>
<circle cx="451.4" cy="289.2" r="8.9" fill="#b5e28c" fill-opacity=".62"/><circle cx="451.4" cy="289.2" r="6.8" fill="#6ecc39" fill-opacity=".62"/>
<text class="ct" x="451.4" y="291.1">6</text>
<circle cx="464.4" cy="287.9" r="8.9" fill="#b5e28c" fill-opacity=".62"/><circle cx="464.4" cy="287.9" r="6.8" fill="#6ecc39" fill-opacity=".62"/>
<text class="ct" x="464.4" y="289.8">33</text>
<circle cx="544.8" cy="306.6" r="8.9" fill="#b5e28c" fill-opacity=".62"/><circle cx="544.8" cy="306.6" r="6.8" fill="#6ecc39" fill-opacity=".62"/>
<text class="ct" x="544.8" y="308.5">31</text>
<circle cx="592.6" cy="315.6" r="8.9" fill="#b5e28c" fill-opacity=".62"/><circle cx="592.6" cy="315.6" r="6.8" fill="#6ecc39" fill-opacity=".62"/>
<text class="ct" x="592.6" y="317.5">2</text>
<circle cx="536.3" cy="343.7" r="8.9" fill="#b5e28c" fill-opacity=".62"/><circle cx="536.3" cy="343.7" r="6.8" fill="#6ecc39" fill-opacity=".62"/>
<text class="ct" x="536.3" y="345.6">3</text>
<circle cx="713.2" cy="199.9" r="8.9" fill="#b5e28c" fill-opacity=".62"/><circle cx="713.2" cy="199.9" r="6.8" fill="#6ecc39" fill-opacity=".62"/>
<text class="ct" x="713.2" y="201.8">5</text>
<circle cx="713.0" cy="271.4" r="8.9" fill="#b5e28c" fill-opacity=".62"/><circle cx="713.0" cy="271.4" r="6.8" fill="#6ecc39" fill-opacity=".62"/>
<text class="ct" x="713.0" y="273.3">54</text>
<circle cx="713.2" cy="301.3" r="8.9" fill="#b5e28c" fill-opacity=".62"/><circle cx="713.2" cy="301.3" r="6.8" fill="#6ecc39" fill-opacity=".62"/>
<text class="ct" x="713.2" y="303.2">56</text>
<circle cx="597.5" cy="354.9" r="8.9" fill="#b5e28c" fill-opacity=".62"/><circle cx="597.5" cy="354.9" r="6.8" fill="#6ecc39" fill-opacity=".62"/>
<text class="ct" x="597.5" y="356.8">2</text>
<rect x="611.0" y="345.5" width="103.6" height="7.2" fill="#fff" fill-opacity=".8"/>
<rect x="613.3" y="347.3" width="5" height="1.7" fill="#2e6bd6"/><rect x="613.3" y="349.0" width="5" height="1.7" fill="#f7d117"/>
<text class="at" x="619.8" y="351.0"><tspan fill="#0078a8">Leaflet</tspan> | © <tspan fill="#0078a8">OpenStreetMap</tspan> contributors</text>
</svg>

<!-- active sidebar highlight -->
<svg width="34" height="34" viewBox="0 0 34 34" style="left:0;top:115px">
<rect x="2" y="3.1" width="27.7" height="28.6" fill="#fff" stroke="#fd6a0b" stroke-width="2.2"/>
<rect x="3.9" y="5.2" width="23.9" height="25.1" rx="2" fill="#e3d5f7"/>
<circle cx="16.1" cy="17.5" r="10.3" fill="#fff"/>
<circle cx="16.1" cy="17.5" r="9.4" fill="#590fb2"/>
<path d="M16.6 13.3a4.3 4.3 0 1 1-4.6 5.6" fill="none" stroke="#fff" stroke-width="1" stroke-linecap="round"/>
<path d="M16.7 15.6a2 2 0 1 1-2.2 2.7" fill="none" stroke="#fff" stroke-width=".9" stroke-linecap="round"/>
<circle cx="16.9" cy="13" r=".8" fill="#fff"/>
</svg>

<!-- popup menu -->
<svg width="130" height="280" viewBox="0 0 130 280" style="left:35px;top:118px">
<rect x="2.45" y="2.45" width="124" height="275.6" fill="#fff" stroke="#fd6a0b" stroke-width="2.7"/>
<rect x="7.5" y="5.9" width="114" height="20.7" rx="6" fill="#f3f3f6"/>
<rect x="7.4" y="140.7" width="114.4" height="22.8" rx="4" fill="#dccaf5"/>
<rect x="4.7" y="138.6" width="119.3" height="27" fill="none" stroke="#fb530c" stroke-width="1.4"/>
<g fill="#f8f5fd"><circle cx="19.6" cy="42.4" r="8.2"/><circle cx="19.6" cy="69.8" r="8.2"/><circle cx="19.6" cy="97.2" r="8.2"/><circle cx="19.6" cy="124.6" r="8.2"/><circle cx="19.6" cy="152" r="8.2"/><circle cx="19.6" cy="179.4" r="8.2"/><circle cx="19.6" cy="206.8" r="8.2"/><circle cx="19.6" cy="234.2" r="8.2"/><circle cx="19.6" cy="261.6" r="8.2"/></g>
<g transform="translate(19.5 42.6)" fill="none" stroke="#5a14d0" stroke-width=".95" stroke-linecap="round" stroke-linejoin="round"><circle r="4.2" fill="#5a14d0" stroke="none"/><circle r="2.2" stroke="#fff" stroke-width=".9"/></g>
<g transform="translate(19.5 70.0)" fill="none" stroke="#5a14d0" stroke-width=".95" stroke-linecap="round" stroke-linejoin="round"><path d="M-2.6 0h5.2M0 -2.6v5.2" stroke-width=".8"/><circle r="1.2" fill="#5a14d0" stroke="none"/><circle cx="-3.4" r="1.1" fill="#5a14d0" stroke="none"/><circle cx="3.4" r="1.1" fill="#5a14d0" stroke="none"/><circle cy="-3.4" r="1.1" fill="#5a14d0" stroke="none"/><circle cy="3.4" r="1.1" fill="#5a14d0" stroke="none"/></g>
<g transform="translate(19.5 97.4)" fill="none" stroke="#5a14d0" stroke-width=".95" stroke-linecap="round" stroke-linejoin="round"><path d="M-3.2 -2.7H1.5a1.4 1.4 0 0 1 0 2.8H-1.6a1.4 1.4 0 0 0 0 2.8H2.2" stroke-width="1"/><path d="M-2.6 -3.9-3.8 -2.7-2.6 -1.5" stroke-width=".9"/><circle cx="3.1" cy="2.9" r="1" fill="#5a14d0" stroke="none"/></g>
<g transform="translate(19.5 124.8)" fill="none" stroke="#5a14d0" stroke-width=".95" stroke-linecap="round" stroke-linejoin="round"><path d="M0 -3.4V.6" stroke-width="1.3"/><circle cy="2.9" r=".8" fill="#5a14d0" stroke="none"/><path d="M-2.6 -2v4M2.6 -2v4" stroke="#b79bea" stroke-width=".8" stroke-dasharray="1 .9"/></g>
<g transform="translate(19.5 152.2)" fill="none" stroke="#5a14d0" stroke-width=".95" stroke-linecap="round" stroke-linejoin="round"><circle cy="-1.4" r="2.2" stroke-width="1"/><path d="M-2.1 1.6C-3.6 2 -3.6 3.6 0 3.6S3.6 2 2.1 1.6" stroke-width="1"/></g>
<g transform="translate(19.5 179.6)" fill="none" stroke="#5a14d0" stroke-width=".95" stroke-linecap="round" stroke-linejoin="round"><rect x="-3.6" y="-3" width="4.6" height="6" rx="1" stroke-width="1"/><rect x="1.4" y="-1.7" width="2.4" height="3.4" rx=".5" fill="#5a14d0" stroke="none"/></g>
<g transform="translate(19.5 207.0)" fill="none" stroke="#5a14d0" stroke-width=".95" stroke-linecap="round" stroke-linejoin="round"><circle r="3.5" stroke-width="1"/><path d="M0 -3.5A3.5 3.5 0 0 1 0 3.5Z" fill="#5a14d0" stroke="none"/><path d="M-1.4 -2.6v5.2" stroke-width=".7"/></g>
<g transform="translate(19.5 234.4)" fill="none" stroke="#5a14d0" stroke-width=".95" stroke-linecap="round" stroke-linejoin="round"><rect x="-3.6" y="-3" width="7.2" height="5" rx="1.2" stroke-width="1"/><path d="M-1.8 3.4h3.6" stroke-width="1"/></g>
<g transform="translate(19.5 261.8)" fill="none" stroke="#5a14d0" stroke-width=".95" stroke-linecap="round" stroke-linejoin="round"><path d="M-.4 -3.6A3.7 3.7 0 1 0 3.6 .6H-.4Z" fill="#5a14d0" stroke="none"/><path d="M.9 -3.7A3 3 0 0 1 3.7 -.8H.9Z" fill="#5a14d0" stroke="none"/><path d="M-2.2 1.2a2 2 0 0 0 2.6 1.2" stroke="#fff" stroke-width=".6"/></g>
<circle cx="111.9" cy="97.2" r="2.8" fill="#f79a3e"/><path d="M110.7 97.2h2.4" stroke="#fff" stroke-width=".7" stroke-linecap="round"/>
<circle cx="111.9" cy="124.6" r="2.8" fill="#f79a3e"/><path d="M110.7 124.6h2.4" stroke="#fff" stroke-width=".7" stroke-linecap="round"/>
</svg>
<div class="t" style="left:77.6px;top:131.6px;font-size:6.4px;letter-spacing:-.07px;font-weight:700;color:#4f12b8">Web Statistics</div>
<div class="mi" style="top:158.2px">Overview</div>
<div class="mi" style="top:185.6px">Traffic Structure</div>
<div class="mi" style="top:213.0px">Outgoing Traffic</div>
<div class="mi" style="top:240.4px">Conversions</div>
<div class="mi" style="top:267.8px">Visitors</div>
<div class="mi" style="top:295.2px">Landing &amp; Referrer Pages</div>
<div class="mi" style="top:322.6px">Competition</div>
<div class="mi" style="top:350.0px">Devices</div>
<div class="mi" style="top:377.4px">UTM Campaigns</div>
</body></html>
